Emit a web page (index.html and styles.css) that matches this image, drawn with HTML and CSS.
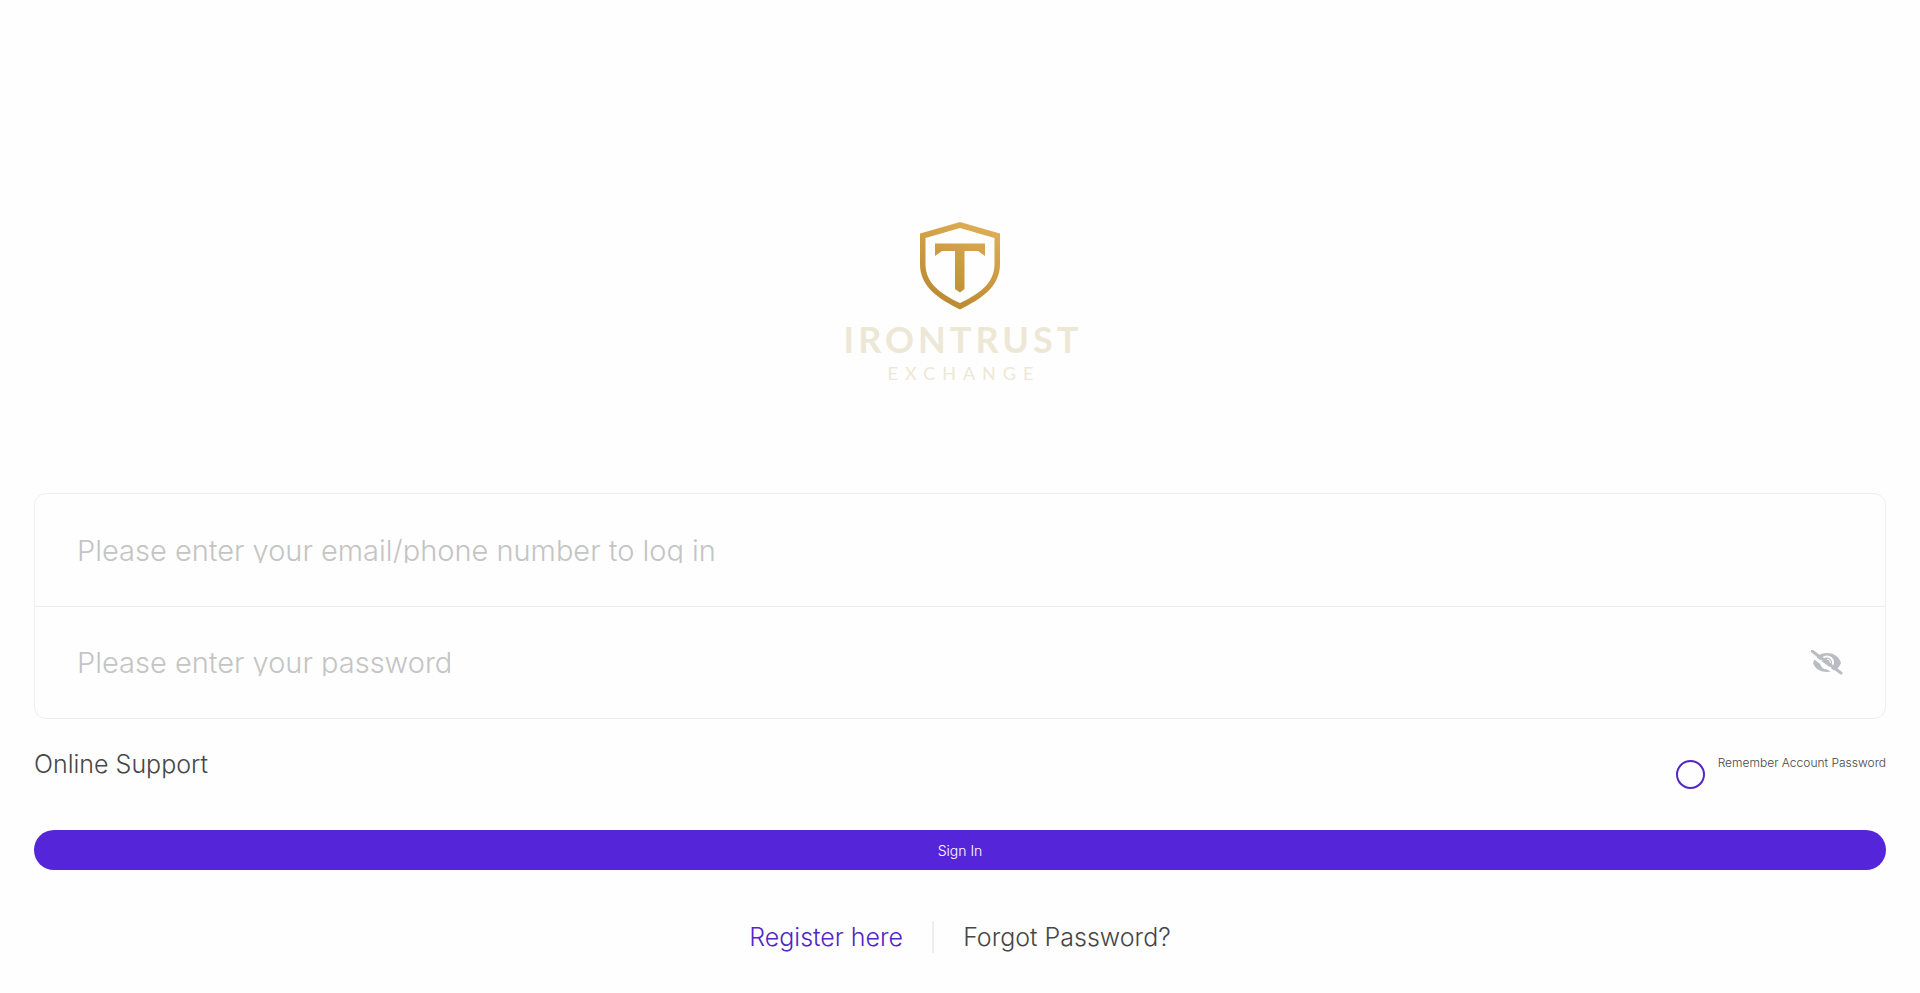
FILE: index.html
```html
<!DOCTYPE html>
<html lang="en">
<head>
<meta charset="utf-8">
<meta name="viewport" content="width=device-width, initial-scale=1">
<title>IronTrust Exchange</title>
<link rel="stylesheet" href="styles.css">
</head>
<body>
<main class="login">
  <svg class="logo" viewBox="0 0 280 200" role="img" aria-label="IronTrust Exchange">
    <defs>
      <linearGradient id="gold" gradientUnits="userSpaceOnUse" x1="165" y1="22" x2="125" y2="110">
        <stop offset="0" stop-color="#dfb057"/>
        <stop offset="0.5" stop-color="#cb9a41"/>
        <stop offset="1" stop-color="#b98931"/>
      </linearGradient>
    </defs>
    <path fill="url(#gold)" fill-rule="evenodd" d="M140 22L180 33.500V64C180 87 161 99 140 109.500C119 99 100 87 100 64V33.500ZM140 28L105.500 38V64C105.500 83 120 93.500 140 103C160 93.500 174.500 83 174.500 64V38Z"/>
    <path fill="url(#gold)" d="M115 43.500H165V56L158 51H144.500V89L140 92.500L135 89V51H122L115 56Z"/>
    <text class="logo-name" x="143" y="153">IRONTRUST</text>
    <text class="logo-sub" x="144" y="180">EXCHANGE</text>
  </svg>

  <form class="form">
    <div class="fields">
      <div class="field">
        <input class="field-input" type="text" aria-label="Email or phone number" placeholder="Please enter your email/phone number to log in">
      </div>
      <div class="field">
        <input class="field-input" type="password" aria-label="Password" placeholder="Please enter your password">
        <button class="eye" type="button" aria-label="Show password">
          <svg viewBox="0 0 32 26" width="32" height="26" aria-hidden="true">
            <path fill="#b9bdc3" d="M2 13C4 6 10 3 16 3S28 6 30 13C28 19 22 22 16 22S4 19 2 13Z"/>
            <circle cx="16" cy="12.500" r="6" fill="#b9bdc3" stroke="#fff" stroke-width="2"/>
            <path d="M16 9Q19.500 9 19.500 13" fill="none" stroke="#fff" stroke-width="1"/>
            <path d="M0 5L29 27" stroke="#fff" stroke-width="3"/>
            <path d="M1 1L30 23" stroke="#b9bdc3" stroke-width="3" stroke-linecap="round"/>
          </svg>
        </button>
      </div>
    </div>

    <div class="options">
      <a class="support" href="#">Online Support</a>
      <label class="remember"><input class="remember-box" type="checkbox"><span>Remember Account Password</span></label>
    </div>

    <button class="submit" type="submit">Sign In</button>
  </form>

  <nav class="links">
    <a class="link link-primary" href="#">Register here</a>
    <span class="divider"></span>
    <a class="link" href="#">Forgot Password?</a>
  </nav>
</main>
</body>
</html>
```
FILE: styles.css
```css
* { box-sizing: border-box; }
body {
  margin: 0;
  background: #fefefe;
  color: #464646;
  font-family: Inter, "Liberation Sans", sans-serif;
  font-weight: 300;
}
a { color: inherit; text-decoration: none; }
.login {
  display: flex;
  flex-direction: column;
  padding: 200px 34px 34px;
}
.logo { width: 280px; align-self: center; margin-bottom: 93px; }
.logo-name, .logo-sub { fill: #ede8d6; text-anchor: middle; font-family: Lato, sans-serif; }
.logo-name { font-size: 36px; font-weight: 700; letter-spacing: 4px; }
.logo-sub { font-size: 18px; font-weight: 400; letter-spacing: 7px; }
.fields { border: 1px solid #eee; border-radius: 12px; }
.field {
  display: flex;
  align-items: center;
  height: 112px;
  padding: 0 42px;
}
.field + .field { border-top: 1px solid #eee; }
.field-input {
  flex: 1;
  min-width: 0;
  height: 26px;
  padding: 0;
  border: 0;
  outline: 0;
  background: transparent;
  color: #464646;
  font: inherit;
  font-size: 29px;
  overflow: clip;
}
.field-input::placeholder { color: #c4c4c4; }
.eye { display: flex; padding: 0; border: 0; background: none; }
.options {
  display: flex;
  justify-content: space-between;
  align-items: flex-start;
  padding-top: 29px;
}
.support { font-size: 25px; line-height: 32px; }
.remember {
  display: flex;
  gap: 13px;
  font-size: 12px;
  line-height: 30px;
}
.remember-box {
  appearance: none;
  width: 29px;
  height: 29px;
  margin: 12px 0 0;
  border: 2px solid #5226c8;
  border-radius: 50%;
}
.submit {
  display: block;
  width: 100%;
  height: 40px;
  margin-top: 41px;
  border: 0;
  border-radius: 20px;
  background: #5526d9;
  color: #fff;
  font: inherit;
  font-size: 14px;
}
.links {
  display: flex;
  justify-content: center;
  align-items: center;
  gap: 29px;
  margin-top: 51px;
}
.link { font-size: 25px; line-height: 32px; }
.link-primary { color: #5226c8; }
.divider { width: 2px; height: 32px; background: #eee; }
```
